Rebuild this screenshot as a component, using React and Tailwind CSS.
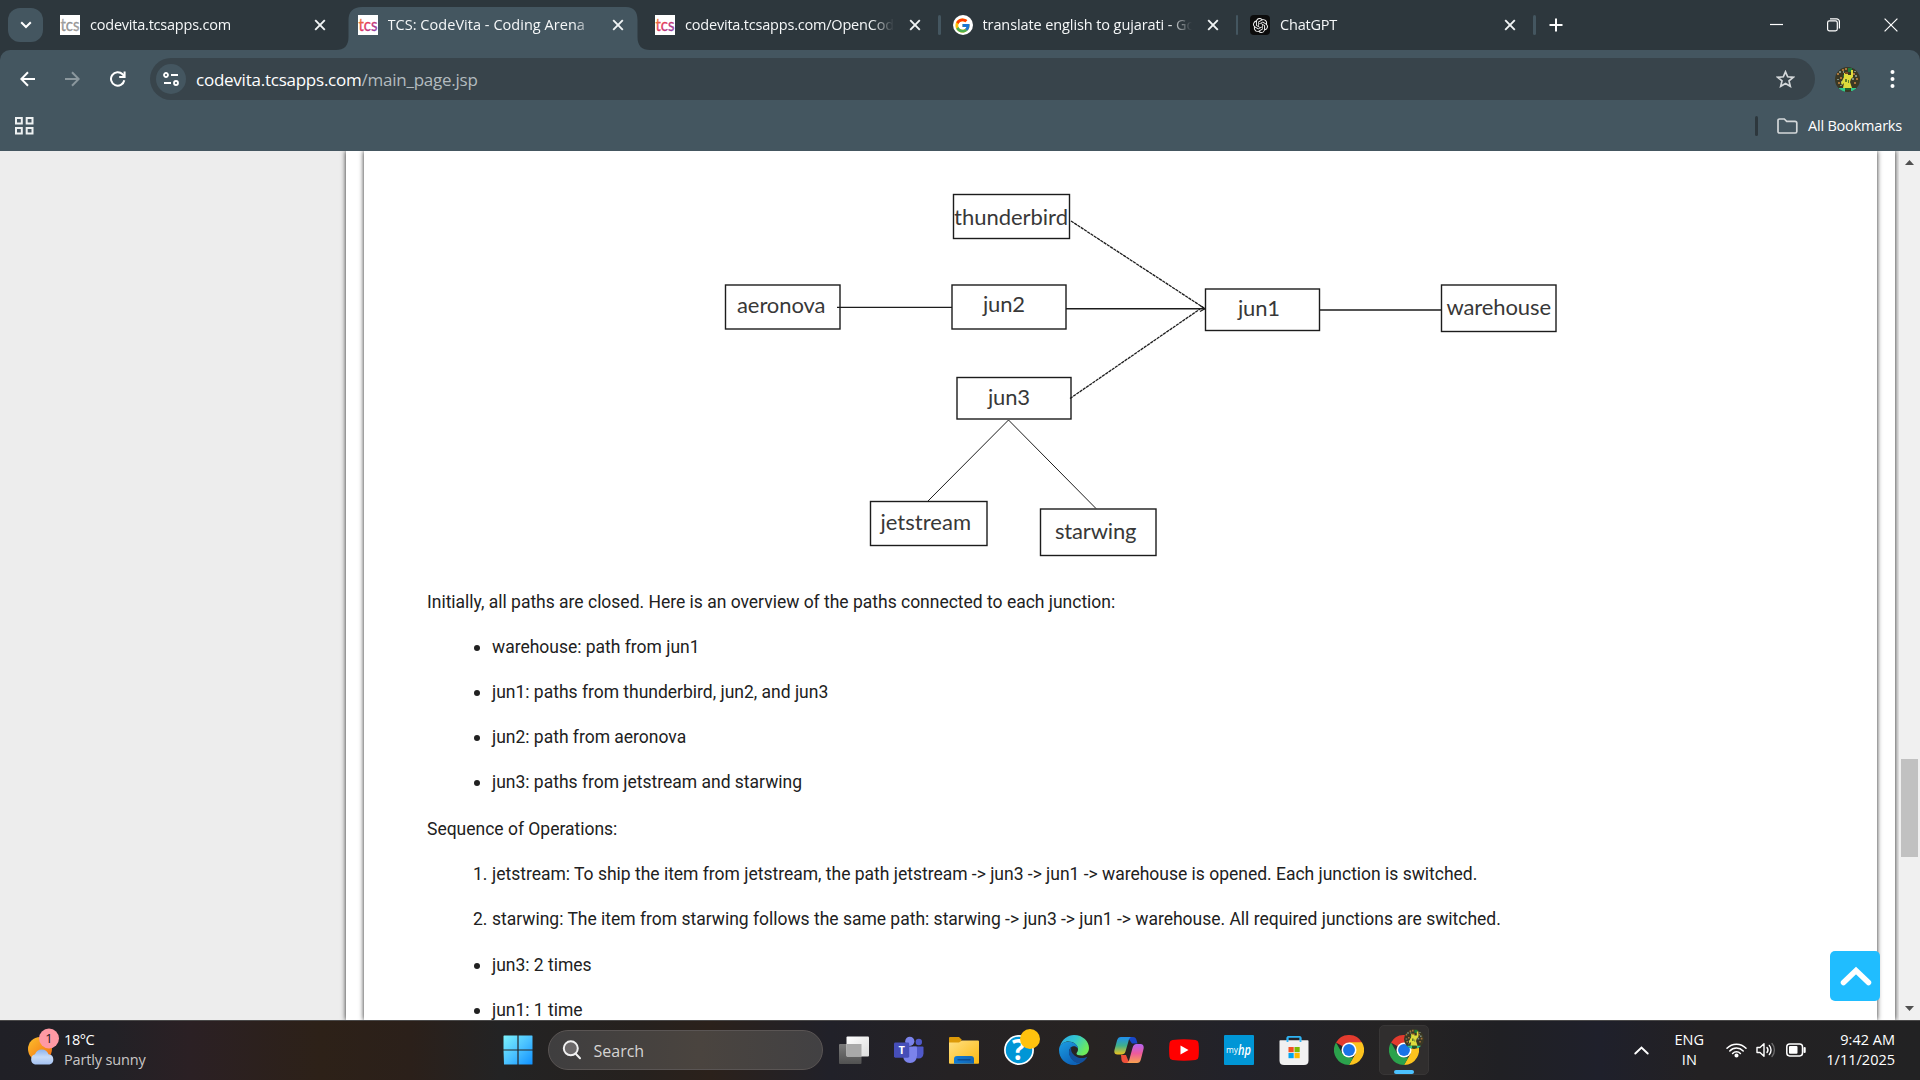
import React from "react";
import { SiOpenai } from "react-icons/si";
import { FcGoogle } from "react-icons/fc";

/* ---------- Browser tabs ---------- */

function TcsIcon({ gray }) {
  const id = gray ? "tcs-gray" : "tcs-color";
  return (
    <svg width="20" height="20" viewBox="0 0 20 20" overflow="visible">
      <defs>
        <linearGradient id={id} x1="0" y1="0" x2="0.9" y2="1">
          <stop offset="0" stopColor={gray ? "#b5b5b5" : "#f6a623"} />
          <stop offset="0.5" stopColor={gray ? "#8f8f8f" : "#e2355f"} />
          <stop offset="1" stopColor={gray ? "#a5a5a5" : "#7b3fb5"} />
        </linearGradient>
      </defs>
      <rect width="20" height="20" fill="#fff" />
      <text x="0.4" y="15.8" fontFamily="Lato" fontSize="17" fontWeight="400" textLength="19" lengthAdjust="spacingAndGlyphs" fill={`url(#${id})`} stroke={`url(#${id})`} strokeWidth="0.3">
        tcs
      </text>
    </svg>
  );
}

function CloseIcon() {
  return (
    <svg width="12" height="12" viewBox="0 0 12 12" stroke="#f1f4f5" strokeWidth="1.9">
      <path d="M1.2 1.2 10.8 10.8M10.8 1.2 1.2 10.8" />
    </svg>
  );
}

function Tab({ icon, title, active, separator, tracking }) {
  return (
    <div className="relative flex h-[50px] w-[297.5px] shrink-0 items-center pl-[15px]">
      {active && (
        <svg className="absolute -left-[7px] top-[7px]" width="314" height="43" viewBox="0 0 314 43">
          <path d="M0 43 C8 43 12.500 39 12.500 30 V13 C12.500 5 17 0 26 0 H290 C298 0 301.500 5 301.500 13 V30 C301.500 39 306 43 314 43 Z" fill="#445660" />
        </svg>
      )}
      <div className="relative flex size-5 items-center justify-center">{icon}</div>
      <div
        className={`relative ml-[10px] w-[209px] overflow-hidden whitespace-nowrap text-[14.5px] leading-6 text-[#f5f7f8] [mask-image:linear-gradient(to_right,#000_186px,transparent_209px)] ${tracking}`}
      >
        {title}
      </div>
      <div className="relative ml-[15px]">
        <CloseIcon />
      </div>
      {separator && <div className="absolute -right-[3px] top-[15px] h-5 w-[2.5px] rounded-full bg-[#445660]" />}
    </div>
  );
}

function TabStrip() {
  return (
    <div className="flex h-[50px] items-center bg-[#2d373d]">
      <div className="ml-2 mr-[2px] flex h-[34px] w-[35px] items-center justify-center rounded-[12px] bg-[#445660]">
        <svg width="12" height="8" viewBox="0 0 12 8" fill="none" stroke="#fff" strokeWidth="2">
          <path d="M1.200 1.200 6 6 10.800 1.200" />
        </svg>
      </div>
      <Tab icon={<TcsIcon gray />} title="codevita.tcsapps.com" tracking="tracking-[-0.22px]" />
      <Tab icon={<TcsIcon />} title="TCS: CodeVita - Coding Arena" active tracking="tracking-[0.04px]" />
      <Tab icon={<TcsIcon />} title="codevita.tcsapps.com/OpenCode" separator tracking="tracking-[-0.2px]" />
      <Tab
        icon={
          <div className="flex size-5 items-center justify-center rounded-full bg-white">
            <FcGoogle size={17} />
          </div>
        }
        title="translate english to gujarati - Goo"
        separator
        tracking="tracking-[-0.1px]"
      />
      <Tab
        icon={
          <div className="flex size-5 items-center justify-center rounded-[4px] bg-[#0c0c0c]">
            <SiOpenai size={15} color="#f4f4f4" />
          </div>
        }
        title="ChatGPT"
        separator
        tracking="tracking-[-0.2px]"
      />
      <svg className="ml-[16px]" width="14" height="14" viewBox="0 0 14 14" stroke="#fff" strokeWidth="2">
        <path d="M7 0.500V13.500M0.500 7H13.500" />
      </svg>
      <div className="ml-auto mr-[22px] flex items-center gap-[44px]">
        <svg width="13" height="14" viewBox="0 0 13 14" stroke="#fff" strokeWidth="1.200">
          <path d="M0 6.500H13" />
        </svg>
        <svg width="13" height="14" viewBox="0 0 13 14" fill="none" stroke="#fff" strokeWidth="1.200">
          <rect x="0.600" y="2.900" width="9.700" height="10" rx="1.800" />
          <path d="M3 0.800H9.500A2.800 2.800 0 0 1 12.400 3.600V10.500" />
        </svg>
        <svg width="14" height="14" viewBox="0 0 14 14" stroke="#fff" strokeWidth="1.200">
          <path d="M0.600 0.600 13.400 13.400M13.400 0.600 0.600 13.400" />
        </svg>
      </div>
    </div>
  );
}

/* ---------- Toolbar ---------- */

/* Round photo of a player in a yellow kit in front of a crowd */
function Avatar({ size }) {
  return (
    <svg width={size} height={size} viewBox="0 0 25 25">
      <defs>
        <clipPath id={`av${size}`}>
          <circle cx="12.500" cy="12.500" r="12.500" />
        </clipPath>
      </defs>
      <g clipPath={`url(#av${size})`}>
        <rect width="25" height="25" fill="#3a3824" />
        <path d="M2 6h2v2H2zM7 2h2v2H7zM5 10h2v2H5zM18 6h2v2h-2zM21 11h2v2h-2zM19 15h2v2h-2zM3 15h2v2H3zM10 1h2v2h-2z" fill="#a8743a" />
        <path d="M4 4h2v2H4zM2 12h2v1H2zM20 8h2v2h-2zM17 11h2v2h-2zM6 14h1v2H6zM8 4h1v2H8zM19 4h2v1h-2zM5 18h2v1H5z" fill="#7f8f80" />
        <path d="M13 1h4v4h-4zM8 8h2v2H8z" fill="#1f7a3a" />
        <path d="M9 6h4v2h3V3h2v7l-2 2-1 3 2 6H8l1-5-2 2-1-2 3-6z" fill="#dedb3c" />
        <path d="M10 5h3v2h-3z" fill="#7a4a22" />
        <path d="M10 12h2v3h-2zM13 13h1v3h-1z" fill="#5d7d2b" />
        <path d="M4 21h6v4H4zM16 21h5v3h-5z" fill="#31c98a" />
        <path d="M10 21h5v2h-5z" fill="#22602d" />
      </g>
    </svg>
  );
}

function Toolbar() {
  return (
    <div className="bg-[#2d373d]">
      <div className="h-[101px] rounded-t-[10px] bg-[#445660]">
        <div className="flex h-[58px] items-center">
          <svg className="ml-5" width="15" height="16" viewBox="0 0 15 16" fill="none" stroke="#fff" strokeWidth="2">
            <path d="M15 8H1.500M8 1.200 1.300 8 8 14.800" />
          </svg>
          <svg className="ml-[30px]" width="15" height="16" viewBox="0 0 15 16" fill="none" stroke="#8b979d" strokeWidth="2">
            <path d="M0 8H13.500M7 1.200 13.700 8 7 14.800" />
          </svg>
          <svg className="ml-[30px]" width="16" height="16" viewBox="0 0 16 16" fill="none" stroke="#fff" strokeWidth="2">
            <path d="M14.300 9.200A6.700 6.700 0 1 1 12.600 3.300L14.300 5.200" />
            <path d="M14.600 0.500V6H9.200" />
          </svg>
          <div className="ml-[24px] flex h-[42px] w-[1665px] items-center rounded-full bg-[#38444b] pl-[6px] pr-5">
            <div className="flex size-[30px] items-center justify-center rounded-full bg-[#445660]">
              <svg width="16" height="14" viewBox="0 0 16 14" fill="none" stroke="#fff" strokeWidth="1.800">
                <circle cx="3" cy="3" r="2" />
                <path d="M8 3H15M1 11H8" />
                <circle cx="13" cy="11" r="2" />
              </svg>
            </div>
            <div className="ml-[10px] pt-px text-[17px] leading-6 tracking-[-0.24px] text-white">
              codevita.tcsapps.com<span className="text-[#b3bbbf]">/main_page.jsp</span>
            </div>
            <svg className="ml-auto" width="19" height="18" viewBox="0 0 19 18" fill="none" stroke="#d3d7d9" strokeWidth="1.700">
              <path d="M9.500 1.800 11.700 6.800 17.200 7.300 13 10.900 14.300 16.300 9.500 13.400 4.700 16.300 6 10.900 1.800 7.300 7.300 6.800Z" />
            </svg>
          </div>
          <div className="ml-5">
            <Avatar size={25} />
          </div>
          <svg className="ml-[30px]" width="5" height="18" viewBox="0 0 5 18" fill="#fff">
            <circle cx="2.500" cy="2.100" r="2" />
            <circle cx="2.500" cy="9" r="2" />
            <circle cx="2.500" cy="15.900" r="2" />
          </svg>
        </div>
        <div className="flex h-[35px] items-center">
          <svg className="ml-[15px]" width="19" height="18" viewBox="0 0 19 18" fill="none" stroke="#eef1f2" strokeWidth="2">
            <rect x="1" y="1" width="5.800" height="5.500" />
            <rect x="11.700" y="1" width="5.800" height="5.500" />
            <rect x="1" y="11" width="5.800" height="5.500" />
            <rect x="11.700" y="11" width="5.800" height="5.500" />
          </svg>
          <div className="ml-auto h-5 w-[2.5px] rounded-full bg-[#2d373d]" />
          <svg className="ml-[19px]" width="21" height="16" viewBox="0 0 21 16" fill="none" stroke="#d3d7d9" strokeWidth="1.700">
            <path d="M1 2.600Q1 1 2.600 1H7.300L9.700 3.300H18Q19.800 3.300 19.800 5V13.400Q19.800 15 18.200 15H2.600Q1 15 1 13.400Z" />
          </svg>
          <div className="ml-[10px] mr-[18px] text-[14.5px] leading-6 tracking-[-0.2px] text-white">All Bookmarks</div>
        </div>
      </div>
    </div>
  );
}

/* ---------- Page content ---------- */

const NODES = [
  { label: "thunderbird", x: 953.5, y: 194.5, w: 116, h: 44, tx: 954, ty: 224.5, tw: 114 },
  { label: "aeronova", x: 725.5, y: 285, w: 114.5, h: 44, tx: 737, ty: 313.3, tw: 88.5 },
  { label: "jun2", x: 952, y: 285, w: 114, h: 44, tx: 983, ty: 312.3, tw: 42 },
  { label: "jun1", x: 1205.5, y: 289, w: 114, h: 41.5, tx: 1238, ty: 315.8, tw: 42 },
  { label: "warehouse", x: 1441.5, y: 285, w: 114.5, h: 46.5, tx: 1446.5, ty: 314.8, tw: 104.5 },
  { label: "jun3", x: 957, y: 377.5, w: 114, h: 41.5, tx: 988, ty: 404.8, tw: 42 },
  { label: "jetstream", x: 870.5, y: 501.5, w: 116.5, h: 44, tx: 880.5, ty: 529.8, tw: 90.5 },
  { label: "starwing", x: 1040.5, y: 509, w: 115.5, h: 46.5, tx: 1055, ty: 538.8, tw: 81.5 },
];

function Diagram() {
  return (
    <svg className="block shrink-0" width="1513" height="429" viewBox="364 151 1513 429">
      <g fill="none" stroke="#1c1c1c" strokeWidth="1.400">
        {NODES.map((n) => (
          <rect key={n.label} x={n.x} y={n.y} width={n.w} height={n.h} />
        ))}
        <path d="M837 307.400H952M1066 308.700H1205M1320 310H1441" />
        <path d="M1008.500 420 928 501M1008.500 420 1096 508.500" strokeWidth="1" />
        <path d="M1071 221 1204 308M1070 398.500 1200 309" strokeWidth="1.300" strokeDasharray="3.200 0.700" />
        <path d="M1200 305.500 1205 308.700 1200 311.500" strokeWidth="1.200" />
      </g>
      <g fontFamily="Lato" fontSize="22" fill="#383838">
        {NODES.map((n) => (
          <text key={n.label} x={n.tx} y={n.ty} textLength={n.tw}>
            {n.label}
          </text>
        ))}
      </g>
    </svg>
  );
}

function Item({ marker, children }) {
  return (
    <li className="flex h-[45px] items-center pl-[109px]">
      <span className="flex w-[19px] shrink-0 items-center">{marker || <span className="ml-[0.5px] size-[6px] rounded-full bg-[#212121]" />}</span>
      <span>{children}</span>
    </li>
  );
}

function Page() {
  return (
    <div className="relative flex h-[869px] overflow-hidden bg-[#ededed]">
      <div className="ml-[346px] flex h-full w-[1549px] bg-white pl-[18px] shadow-[0_0_5px_#222]">
        <main className="flex h-full w-[1513px] flex-col bg-white font-['Roboto',sans-serif] text-[17.5px] tracking-[-0.009px] text-[#212121] shadow-[0_0_5px_#222]">
          <Diagram />
          <p className="flex h-[45px] shrink-0 items-center pl-[63px]">
            Initially, all paths are closed. Here is an overview of the paths connected to each junction:
          </p>
          <ul>
            <Item>warehouse: path from jun1</Item>
            <Item>jun1: paths from thunderbird, jun2, and jun3</Item>
            <Item>jun2: path from aeronova</Item>
            <Item>jun3: paths from jetstream and starwing</Item>
          </ul>
          <p className="mt-[2px] flex h-[45px] shrink-0 items-center pl-[63px]">Sequence of Operations:</p>
          <ol>
            <Item marker="1.">
              jetstream: To ship the item from jetstream, the path jetstream -&gt; jun3 -&gt; jun1 -&gt; warehouse is opened. Each junction is switched.
            </Item>
            <Item marker="2.">
              starwing: The item from starwing follows the same path: starwing -&gt; jun3 -&gt; jun1 -&gt; warehouse. All required junctions are switched.
            </Item>
          </ol>
          <ul className="mt-px">
            <Item>jun3: 2 times</Item>
            <Item>jun1: 1 time</Item>
          </ul>
        </main>
      </div>
      <div className="relative ml-[4px] flex w-[21px] flex-col items-center bg-[#f0f0f0]">
        <svg className="mt-[9px]" width="9" height="5" viewBox="0 0 9 5" fill="#505050">
          <path d="M0 5 4.500 0 9 5Z" />
        </svg>
        <div className="mt-[594px] h-[98px] w-[17px] bg-[#c1c1c1]" />
        <svg className="mb-[9px] mt-auto" width="9" height="5" viewBox="0 0 9 5" fill="#505050">
          <path d="M0 0 4.500 5 9 0Z" />
        </svg>
      </div>
      <button className="absolute bottom-[19px] right-10 flex size-[50px] items-center justify-center rounded-[5px] bg-[#20bdff]">
        <svg className="ml-px" width="32" height="20" viewBox="0 0 32 20" fill="none" stroke="#fff" strokeWidth="5.5" strokeLinecap="round" strokeLinejoin="miter">
          <path d="M3.500 16.500 16 4.500 28.500 16.500" />
        </svg>
      </button>
    </div>
  );
}

/* ---------- Taskbar ---------- */

function WeatherIcon() {
  return (
    <svg width="32" height="38" viewBox="0 0 32 38">
      <defs>
        <linearGradient id="sun" x1="0" y1="0" x2="1" y2="1">
          <stop offset="0" stopColor="#fbc02d" />
          <stop offset="1" stopColor="#f4690f" />
        </linearGradient>
        <linearGradient id="cloud" x1="0" y1="0" x2="0" y2="1">
          <stop offset="0" stopColor="#8db4ee" />
          <stop offset="0.500" stopColor="#c7dbf7" />
          <stop offset="1" stopColor="#a4c2f2" />
        </linearGradient>
      </defs>
      <circle cx="12" cy="21" r="12" fill="url(#sun)" />
      <path d="M7 36.500A5.300 5.300 0 0 1 7 26.300 7.200 7.200 0 0 1 20.500 26.300 5.200 5.200 0 0 1 21.500 36.500Z" fill="url(#cloud)" />
      <circle cx="21" cy="10.500" r="10" fill="#ff99a4" />
      <text x="21" y="15.300" textAnchor="middle" fontFamily="Open Sans" fontSize="13" fill="#26161a">
        1
      </text>
    </svg>
  );
}

function StartIcon() {
  return (
    <svg width="30" height="30" viewBox="0 0 30 30">
      <defs>
        <linearGradient id="win" gradientUnits="userSpaceOnUse" x1="0" y1="0" x2="30" y2="30">
          <stop offset="0" stopColor="#7df3fb" />
          <stop offset="0.500" stopColor="#4cc3ff" />
          <stop offset="1" stopColor="#0d8fff" />
        </linearGradient>
      </defs>
      <path d="M1 0.500H14.400V14.400H0.500V1ZM15.600 0.500H29Q29.500 0.500 29.500 1V14.400H15.600ZM0.500 15.600H14.400V29.500H1ZM15.600 15.600H29.500V29Q29.500 29.500 29 29.500H15.600Z" fill="url(#win)" />
    </svg>
  );
}

function TaskViewIcon() {
  return (
    <svg width="30" height="30" viewBox="0 0 30 30">
      <defs>
        <linearGradient id="tv1" x1="0" y1="0" x2="1" y2="1">
          <stop offset="0" stopColor="#fff" />
          <stop offset="1" stopColor="#dcdcdc" />
        </linearGradient>
        <linearGradient id="tv2" x1="0" y1="0" x2="0" y2="1">
          <stop offset="0" stopColor="#7b7b7b" />
          <stop offset="1" stopColor="#515151" />
        </linearGradient>
      </defs>
      <rect x="0" y="9" width="22.500" height="20" rx="1" fill="url(#tv2)" />
      <rect x="7.500" y="1.500" width="22.500" height="20" rx="1" fill="url(#tv1)" />
      <rect x="7.500" y="9" width="15" height="12.500" fill="#a9a9a9" />
    </svg>
  );
}

function TeamsIcon() {
  return (
    <svg width="30" height="30" viewBox="0 0 30 30">
      <circle cx="24.800" cy="7" r="3.200" fill="#5059c9" />
      <path d="M19 11.500H28.500Q29.500 11.500 29.500 12.500V18.500Q29 23.500 24.500 23.500Q20.500 23.500 19 20Z" fill="#5059c9" />
      <circle cx="15.800" cy="6.300" r="4.600" fill="#7b83eb" />
      <path d="M9 11.500H22Q23 11.500 23 12.500V20.500Q22.500 28 16 28Q9.500 28 9 20.500Z" fill="#7b83eb" />
      <rect x="0" y="7.500" width="15.200" height="15.200" rx="1.400" fill="#464eb8" />
      <text x="7.600" y="19" textAnchor="middle" fontFamily="Open Sans" fontWeight="700" fontSize="11" fill="#fff">
        T
      </text>
    </svg>
  );
}

function ExplorerIcon() {
  return (
    <svg width="30" height="30" viewBox="0 0 30 30">
      <defs>
        <linearGradient id="fold" x1="0" y1="0" x2="1" y2="1">
          <stop offset="0" stopColor="#ffe082" />
          <stop offset="1" stopColor="#fbb911" />
        </linearGradient>
        <linearGradient id="tray" x1="0" y1="0" x2="1" y2="0">
          <stop offset="0" stopColor="#0f7bd6" />
          <stop offset="1" stopColor="#1467b3" />
        </linearGradient>
      </defs>
      <path d="M0 3Q0 2 1 2H10L12.500 4.500V10H0Z" fill="#dd9a08" />
      <path d="M0 7.500H10L13 5.500H29Q30 5.500 30 6.500V28Q30 28.800 29 28.800H1Q0 28.800 0 28Z" fill="url(#fold)" />
      <path d="M5 28.800V24Q5 21 8 21H22Q25 21 25 24V28.800Z" fill="url(#tray)" />
      <path d="M8.500 24.800H21.500" stroke="#0a4586" strokeWidth="1.200" />
    </svg>
  );
}

function HelpIcon() {
  return (
    <div className="relative size-[30px]">
      <svg width="30" height="30" viewBox="0 0 30 30">
        <circle cx="15" cy="15" r="14.100" fill="#0096d6" stroke="#fff" strokeWidth="1.700" />
        <text x="14.800" y="25" textAnchor="middle" fontFamily="Open Sans" fontWeight="700" fontSize="28" fill="#fff">
          ?
        </text>
      </svg>
      <div className="absolute -top-[6px] left-[16px] size-5 rounded-full bg-[#ffc20e]" />
    </div>
  );
}

function EdgeIcon() {
  return (
    <svg width="30" height="30" viewBox="0 0 30 30">
      <defs>
        <linearGradient id="eg1" x1="0" y1="0" x2="1" y2="0.500">
          <stop offset="0" stopColor="#2aa5e8" />
          <stop offset="0.500" stopColor="#33c6d0" />
          <stop offset="1" stopColor="#6dea5b" />
        </linearGradient>
        <linearGradient id="eg2" x1="0" y1="0" x2="0.600" y2="1">
          <stop offset="0" stopColor="#1b9de2" />
          <stop offset="1" stopColor="#0d62b8" />
        </linearGradient>
      </defs>
      <path d="M1 11.500C3 4 9 0 15 0C24 0 30 6.500 30 13C30 18 26.500 20.500 22.500 20.500C19 20.500 17.500 19.500 17.500 18.500C17.500 17.500 19 17 19 14.500C19 10 14.500 6.500 9.500 6.500C5 6.500 2.500 9 1 11.500Z" fill="url(#eg1)" />
      <path d="M0 15C0 10 4 6.800 9.500 6.800C14.500 6.800 18.500 9.500 19 13.500C17.500 11.500 15.500 11 14 11.300C10.500 12 9.500 16 10.500 19.500C12 24.500 17 28 21.500 28C19.500 29.500 17 30 15 30C6 30 0 23 0 15Z" fill="url(#eg2)" />
      <path d="M12.300 12.300C8.500 15.500 9.800 21 13 24.500C16 28 20 28.500 21.800 28C24.500 26.800 27 24.500 28.300 21.700C24.500 23.800 19 23.500 15.500 20.500C12.500 18 11.500 15 12.300 12.300Z" fill="#12509c" />
    </svg>
  );
}

function CopilotIcon() {
  return (
    <svg width="30" height="30" viewBox="0 0 30 30">
      <defs>
        <linearGradient id="cp1" x1="0" y1="0" x2="0" y2="1">
          <stop offset="0" stopColor="#1f8ff0" />
          <stop offset="0.500" stopColor="#3fb08a" />
          <stop offset="1" stopColor="#efc31c" />
        </linearGradient>
        <linearGradient id="cp2" x1="0.500" y1="0" x2="0.500" y2="1">
          <stop offset="0" stopColor="#b564f2" />
          <stop offset="0.500" stopColor="#ee5b9b" />
          <stop offset="1" stopColor="#f9a24f" />
        </linearGradient>
      </defs>
      <path d="M14 2H19C21 2 22 3 22.500 5L23.500 8.500H18L15.500 5Z" fill="#1847c8" />
      <path d="M7 2H17.500C15.500 2.500 15 4 14.400 6.500L11.500 16.500C10.800 18.700 9.500 19.500 7.500 19.500H3.500C0.500 19.500 -0.200 17.500 0.600 14.500L3 5.500C3.800 3 5 2 7 2Z" fill="url(#cp1)" />
      <path d="M7 20H12L14 25L16 28H11C9 28 8 27 7.500 25Z" fill="#f0503a" />
      <path d="M23 28H12.500C14.500 27.500 15 26 15.600 23.500L18.500 13C19.200 10.500 20.500 9 22.500 9H26.500C29.500 9 30.200 11.500 29.400 14.500L27 24C26.200 27 25 28 23 28Z" fill="url(#cp2)" />
    </svg>
  );
}

function YoutubeIcon() {
  return (
    <svg width="30" height="22" viewBox="0 0 30 22">
      <path d="M3.500 0.900Q15 -0.300 26.500 0.900Q29.200 1.200 29.500 4Q30.300 11 29.500 18Q29.200 20.800 26.500 21.100Q15 22.300 3.500 21.100Q0.800 20.800 0.500 18Q-0.300 11 0.500 4Q0.800 1.200 3.500 0.900Z" fill="#f00" />
      <path d="M11.500 6.500 19.500 11 11.500 15.500Z" fill="#fff" />
    </svg>
  );
}

function MyHpIcon() {
  return (
    <svg width="30" height="30" viewBox="0 0 30 30">
      <rect width="30" height="30" rx="1" fill="#0096d6" />
      <text x="2" y="18.300" fontFamily="Open Sans" fontSize="9.500" fill="#fff" textLength="12" lengthAdjust="spacingAndGlyphs">
        my
      </text>
      <text x="14" y="20" fontFamily="Open Sans" fontStyle="italic" fontWeight="600" fontSize="15" fill="#fff" textLength="13" lengthAdjust="spacingAndGlyphs">
        hp
      </text>
    </svg>
  );
}

function StoreIcon() {
  return (
    <svg width="30" height="30" viewBox="0 0 30 30">
      <path d="M8.500 7V2.500Q8.500 1.800 9.200 1.800H20.800Q21.500 1.800 21.500 2.500V7" fill="none" stroke="#2fb4f4" strokeWidth="1.800" />
      <path d="M0.500 6Q0.500 5.200 1.300 5.200H28.700Q29.500 5.200 29.500 6V25.500Q29.500 30 25 30H5Q0.500 30 0.500 25.500Z" fill="#f1f1f1" />
      <path d="M8.500 2.500V7M21.500 2.500V7" stroke="#2fb4f4" strokeWidth="1.800" />
      <rect x="9.500" y="12" width="5.200" height="5.200" fill="#f25022" />
      <rect x="15.500" y="12" width="5.200" height="5.200" fill="#7fba00" />
      <rect x="9.500" y="18" width="5.200" height="5.200" fill="#00a4ef" />
      <rect x="15.500" y="18" width="5.200" height="5.200" fill="#ffb900" />
    </svg>
  );
}

function ChromeIcon() {
  return (
    <svg width="30" height="30" viewBox="0 0 48 48">
      <path d="M24 24 3.200 12A24 24 0 0 1 44.800 12Z" fill="#e33b2e" />
      <path d="M24 12H44.800A24 24 0 0 1 24 48L34.400 30Z" fill="#fcc31e" />
      <path d="M3.200 12 13.600 30 24 36H30.900L24 48A24 24 0 0 1 3.200 12Z" fill="#2ba24c" />
      <path d="M24 12H44.800L34 20Z" fill="#fcc31e" />
      <circle cx="24" cy="24" r="12" fill="#fff" />
      <circle cx="24" cy="24" r="9.500" fill="#1a73e8" />
    </svg>
  );
}

function TaskCell({ children }) {
  return <div className="flex h-full w-[55px] items-center justify-center">{children}</div>;
}

function Taskbar() {
  return (
    <div className="flex h-[60px] items-center border-t border-[#4a4949] bg-[linear-gradient(to_right,#202026_0px,#222126_110px,#2b2024_190px,#2d2118_320px,#2b201a_410px,#232324_500px,#26211e_640px,#2b211b_710px,#212129_830px,#252224_950px,#272322_1090px,#22222a_1240px,#252323_1400px,#202024_1500px,#1f202b_1600px,#232123_1700px,#222223_1920px)] pb-px text-[14.5px] leading-5 text-white">
      <div className="ml-[28px] flex w-[474.5px] items-center">
        <div className="-mt-[6px]">
          <WeatherIcon />
        </div>
        <div className="-mt-px ml-1">
          <div className="tracking-[-0.4px]">18°C</div>
          <div className="tracking-[-0.15px] text-[#c9c7c6]">Partly sunny</div>
        </div>
      </div>
      <StartIcon />
      <div className="ml-[15px] flex h-10 w-[275px] items-center rounded-full border border-[#5a5554] bg-[linear-gradient(to_right,#3f3e3f,#4a443f_55%,#424143)] pl-[13px]">
        <svg width="20" height="20" viewBox="0 0 20 20" fill="#6b6869" stroke="#f1f1f1" strokeWidth="2" strokeLinecap="round">
          <circle cx="8.800" cy="8.300" r="7" />
          <path d="M13.500 13.500 18 18.300" />
        </svg>
        <div className="ml-[12px] pt-px text-[16px] text-[#d6d4d3]">Search</div>
      </div>
      <div className="ml-[3.5px] flex h-full">
        <TaskCell><TaskViewIcon /></TaskCell>
        <TaskCell><TeamsIcon /></TaskCell>
        <TaskCell><ExplorerIcon /></TaskCell>
        <TaskCell><HelpIcon /></TaskCell>
        <TaskCell><EdgeIcon /></TaskCell>
        <TaskCell><CopilotIcon /></TaskCell>
        <TaskCell><YoutubeIcon /></TaskCell>
        <TaskCell><MyHpIcon /></TaskCell>
        <TaskCell><StoreIcon /></TaskCell>
        <TaskCell><ChromeIcon /></TaskCell>
        <TaskCell>
          <div className="relative flex size-[50px] items-center justify-center rounded-[5px] border border-[#383636] bg-[#302e2e]">
            <ChromeIcon />
            <div className="absolute left-[24px] top-[3px]">
              <Avatar size={20} />
            </div>
            <div className="absolute bottom-0 left-[14px] h-1 w-5 rounded-full bg-[#4cc2ff]" />
          </div>
        </TaskCell>
      </div>
      <svg className="ml-auto" width="15" height="9" viewBox="0 0 15 9" fill="none" stroke="#fff" strokeWidth="1.900" strokeLinecap="round">
        <path d="M1.300 7.500 7.500 1.500 13.700 7.500" />
      </svg>
      <div className="ml-[20px] w-[40px] text-center">
        <div>ENG</div>
        <div>IN</div>
      </div>
      <svg className="ml-[17px]" width="21" height="16" viewBox="0 0 21 16" fill="none" stroke="#fff" strokeWidth="1.500" strokeLinecap="round">
        <path d="M1 6.300A13 13 0 0 1 20 6.300M3.800 8.900A9.300 9.300 0 0 1 17.200 8.900M6.600 11.400A5.400 5.400 0 0 1 14.400 11.400" />
        <circle cx="10.500" cy="13.500" r="1.300" fill="#fff" />
      </svg>
      <svg className="ml-[9px]" width="20" height="16" viewBox="0 0 20 16" fill="none" stroke="#fff" strokeWidth="1.400" strokeLinecap="round" strokeLinejoin="round">
        <path d="M1 5.500H4L8 1.800V14.200L4 10.500H1Z" />
        <path d="M11 5.500A4 4 0 0 1 11 10.500M13.300 3.400A7 7 0 0 1 13.300 12.600" />
        <path d="M16 1.500A10 10 0 0 1 16 14.500" stroke="#6b6a6b" />
      </svg>
      <svg className="ml-[10px]" width="20" height="14" viewBox="0 0 20 14" fill="none" stroke="#fff" strokeWidth="1.500">
        <rect x="0.800" y="0.900" width="15.700" height="12" rx="2.800" />
        <rect x="3" y="3" width="8.500" height="7.800" rx="1" fill="#fff" stroke="none" />
        <path d="M18.600 5V9" strokeWidth="2.200" strokeLinecap="round" />
      </svg>
      <div className="-mt-px ml-[20px] mr-[25px] text-right">
        <div>9:42 AM</div>
        <div>1/11/2025</div>
      </div>
    </div>
  );
}

export default function App() {
  return (
    <div className="h-[1080px] w-[1920px] overflow-hidden font-['Open_Sans','Noto_Sans',sans-serif]">
      <TabStrip />
      <Toolbar />
      <Page />
      <Taskbar />
    </div>
  );
}
